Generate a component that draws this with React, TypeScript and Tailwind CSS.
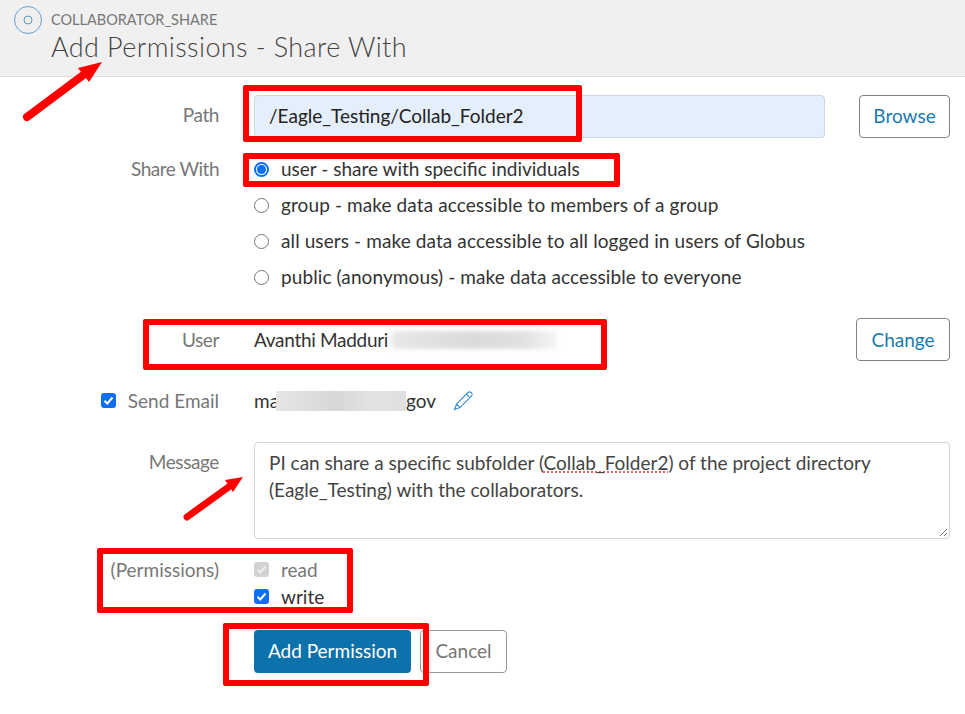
import React from "react";

function RedBox({ className }: { className: string }) {
  return <div className={`absolute border-[6px] border-[#fe0000] rounded-[2px] ${className}`} />;
}

function Arrow({ className, w, h, x1, y1, x2, y2, sw, head }: { className: string; w: number; h: number; x1: number; y1: number; x2: number; y2: number; sw: number; head: string }) {
  return (
    <svg className={`absolute ${className}`} width={w} height={h} viewBox={`0 0 ${w} ${h}`}>
      <line x1={x1} y1={y1} x2={x2} y2={y2} stroke="#fe0000" strokeWidth={sw} strokeLinecap="round" />
      <polygon points={head} fill="#fe0000" />
    </svg>
  );
}

function Radio({ checked, label }: { checked?: boolean; label: string }) {
  return (
    <label className="flex items-center h-[36px]">
      <span className={`w-[15px] h-[15px] rounded-full border flex items-center justify-center bg-white ${checked ? "border-[#0b6ff0] border-2" : "border-[#767676]"}`}>
        {checked && <span className="w-[9px] h-[9px] rounded-full bg-[#0b6ff0]" />}
      </span>
      <span className={`ml-[12px] text-[#333] pb-[1px] ${checked ? "" : "tracking-[0.1px]"}`}>{label}</span>
    </label>
  );
}

function Check({ grey }: { grey?: boolean }) {
  return (
    <span className={`w-[15px] h-[15px] rounded-[3px] flex items-center justify-center ${grey ? "bg-[#d2d2d2]" : "bg-[#0b6ff0]"}`}>
      <svg width="11" height="11" viewBox="0 0 11 11"><path d="M1.5 5.8 L4.3 8.5 L9.5 2.5" fill="none" stroke={grey ? "#efefef" : "#fff"} strokeWidth="2" /></svg>
    </span>
  );
}

export default function App() {
  return (
    <div className="relative w-[965px] h-[714px] bg-white overflow-hidden text-[19px] leading-[24px] text-[#333] font-['Lato','Liberation_Sans',sans-serif]">
      <header className="h-[77px] bg-[#f0f0f0] border-b border-[#dcdcdc] flex pl-[14px] pt-[6px]">
        <svg width="29" height="29" viewBox="0 0 29 29">
          <circle cx="14" cy="14" r="13.5" fill="none" stroke="#6a9fcc" strokeWidth="1" />
          <circle cx="14" cy="14" r="4" fill="none" stroke="#5f96c6" strokeWidth="1" />
        </svg>
        <div className="ml-[8px]">
          <div className="text-[14.5px] leading-[18px] mt-[5px] text-[#777]">COLLABORATOR_SHARE</div>
          <div className="text-[27px] leading-[32px] mt-[2px] text-[#444] font-light tracking-[0.4px]">Add Permissions - Share With</div>
        </div>
      </header>

      <main className="pt-[18px] pr-[15px]">
        <div className="flex items-center h-[43px]">
          <div className="w-[219px] text-right text-[#777] pb-[3px] tracking-[-0.4px]">Path</div>
          <div className="ml-[35px] w-[571px] h-full bg-[#e5eefb] border border-[#cdd7e2] rounded-[4px] flex items-center pl-[14px] pb-[2px] text-[#222]">/Eagle_Testing/Collab_Folder2</div>
          <button className="ml-[34px] w-[91px] h-full border border-[#808080] rounded-[4px] text-[#1a7ab0] pb-[2px]">Browse</button>
        </div>

        <div className="flex mt-[13px]">
          <div className="w-[219px] text-right text-[#777] leading-[36px] tracking-[-0.5px]">Share With</div>
          <div className="ml-[35px]">
            <Radio checked label="user - share with specific individuals" />
            <Radio label="group - make data accessible to members of a group" />
            <Radio label="all users - make data accessible to all logged in users of Globus" />
            <Radio label="public (anonymous) - make data accessible to everyone" />
          </div>
        </div>

        <div className="flex items-center h-[43px] mt-[23px]">
          <div className="w-[219px] text-right text-[#777] tracking-[-0.4px]">User</div>
          <div className="ml-[35px] text-[#333] tracking-[-0.3px]">Avanthi Madduri</div>
          <div className="ml-[4px] w-[165px] h-[18px] bg-[linear-gradient(90deg,#e6e7e7,#d9dbdb_50%,#e0e1e1_80%,#f6f6f6)] blur-[2px]" />
          <button className="ml-auto w-[94px] h-full border border-[#808080] rounded-[4px] text-[#1a7ab0]">Change</button>
        </div>

        <div className="flex items-center h-[24px] mt-[27px]">
          <div className="w-[219px] flex items-center justify-end text-[#777] pt-[1px]">
            <Check />
            <span className="ml-[12px]">Send Email</span>
          </div>
          <div className="ml-[35px] flex items-center relative pt-[1px]">
            <span>ma</span>
            <div className="relative ml-[-3px] w-[130px] h-[20px] bg-[linear-gradient(90deg,#e6e6e6,#d6d7d7_45%,#e2e3e3_75%,#dedfdf)] blur-[0.7px]" />
            <span>gov</span>
            <svg className="ml-[17px]" width="21" height="21" viewBox="0 0 21 21" fill="none" stroke="#3b8fd0" strokeWidth="1.1">
              <path d="M1.5 19.5 L3.5 14 L15 2.5 Q16.7 1.2 18.4 2.6 Q20 4.3 18.7 6 L7 17.6 Z M3.5 14 L7 17.6 M13.4 4 L17.2 7.6" />
            </svg>
          </div>
        </div>

        <div className="flex mt-[30px]">
          <div className="w-[219px] text-right text-[#777] pt-[8px] tracking-[-0.4px]">Message</div>
          <div className="relative ml-[35px] w-[696px] h-[97px] border border-[#cdd5dd] rounded-[4px] pl-[14px] leading-[27px] pt-[6px] text-[#444]">
            <div>PI can share a specific subfolder (<span className="underline decoration-dotted decoration-[#f06060] decoration-2">Collab_Folder2</span>) of the project directory</div>
            <div>(Eagle_Testing) with the collaborators.</div>
            <svg className="absolute right-[1px] bottom-[1px]" width="9" height="9" viewBox="0 0 9 9" stroke="#777" strokeWidth="1"><path d="M1 8 L8 1 M5 8 L8 5" /></svg>
          </div>
        </div>

        <div className="flex mt-[17px]">
          <div className="w-[219px] text-right text-[#777] leading-[27px]">(Permissions)</div>
          <div className="ml-[35px]">
            <label className="flex items-center h-[27px]"><Check grey /><span className="ml-[12px] text-[#777]">read</span></label>
            <label className="flex items-center h-[27px]"><Check /><span className="ml-[12px]">write</span></label>
          </div>
        </div>

        <div className="flex ml-[254px] mt-[20px] h-[43px]">
          <button className="w-[157px] h-full rounded-[4px] bg-[#0b72ab] text-white pb-[2px]">Add Permission</button>
          <button className="ml-[9px] w-[87px] h-full border border-[#999] rounded-[4px] text-[#777] pb-[2px]">Cancel</button>
        </div>
      </main>

      <RedBox className="left-[243px] top-[85px] w-[339px] h-[57px]" />
      <RedBox className="left-[243px] top-[153px] w-[377px] h-[34px]" />
      <RedBox className="left-[143px] top-[319px] w-[464px] h-[51px]" />
      <RedBox className="left-[97px] top-[548px] w-[256px] h-[65px]" />
      <RedBox className="left-[223px] top-[623px] w-[206px] h-[63px]" />

      <Arrow className="left-[20px] top-[58px]" w={90} h={66} x1={7} y1={59} x2={66} y2={15} sw={8} head="82,4 58,10 69,24" />
      <Arrow className="left-[180px] top-[472px]" w={66} h={52} x1={7} y1={45} x2={50} y2={14} sw={7} head="63,5 45,8 53,20" />
    </div>
  );
}
